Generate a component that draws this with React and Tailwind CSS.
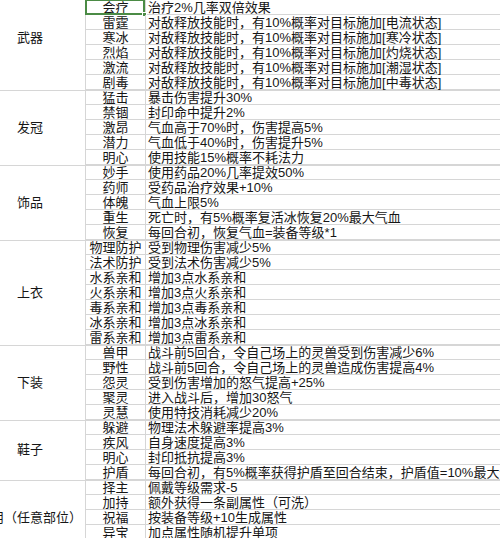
import React from 'react';

const groups = [
  {
    name: '武器',
    rows: [
      ['', ''],
      ['会疗', '治疗2%几率双倍效果', true],
      ['雷霆', '对敌释放技能时，有10%概率对目标施加[电流状态]'],
      ['寒冰', '对敌释放技能时，有10%概率对目标施加[寒冷状态]'],
      ['烈焰', '对敌释放技能时，有10%概率对目标施加[灼烧状态]'],
      ['激流', '对敌释放技能时，有10%概率对目标施加[潮湿状态]'],
      ['剧毒', '对敌释放技能时，有10%概率对目标施加[中毒状态]'],
    ],
  },
  {
    name: '发冠',
    rows: [
      ['猛击', '暴击伤害提升30%'],
      ['禁锢', '封印命中提升2%'],
      ['激昂', '气血高于70%时，伤害提高5%'],
      ['潜力', '气血低于40%时，伤害提升5%'],
      ['明心', '使用技能15%概率不耗法力'],
    ],
  },
  {
    name: '饰品',
    rows: [
      ['妙手', '使用药品20%几率提效50%'],
      ['药师', '受药品治疗效果+10%'],
      ['体魄', '气血上限5%'],
      ['重生', '死亡时，有5%概率复活冰恢复20%最大气血'],
      ['恢复', '每回合初，恢复气血=装备等级*1'],
    ],
  },
  {
    name: '上衣',
    rows: [
      ['物理防护', '受到物理伤害减少5%'],
      ['法术防护', '受到法术伤害减少5%'],
      ['水系亲和', '增加3点水系亲和'],
      ['火系亲和', '增加3点火系亲和'],
      ['毒系亲和', '增加3点毒系亲和'],
      ['冰系亲和', '增加3点冰系亲和'],
      ['雷系亲和', '增加3点雷系亲和'],
    ],
  },
  {
    name: '下装',
    rows: [
      ['兽甲', '战斗前5回合，令自己场上的灵兽受到伤害减少6%'],
      ['野性', '战斗前5回合，令自己场上的灵兽造成伤害提高4%'],
      ['怨灵', '受到伤害增加的怒气提高+25%'],
      ['聚灵', '进入战斗后，增加30怒气'],
      ['灵慧', '使用特技消耗减少20%'],
    ],
  },
  {
    name: '鞋子',
    rows: [
      ['躲避', '物理法术躲避率提高3%'],
      ['疾风', '自身速度提高3%'],
      ['明心', '封印抵抗提高3%'],
      ['护盾', '每回合初，有5%概率获得护盾至回合结束，护盾值=10%最大气血'],
    ],
  },
  {
    name: '通用（任意部位）',
    rows: [
      ['择主', '佩戴等级需求-5'],
      ['加持', '额外获得一条副属性（可洗）'],
      ['祝福', '按装备等级+10生成属性'],
      ['异宝', '加点属性随机提升单项'],
      ['', ''],
    ],
  },
];

const Row = ({ name, desc, selected }) => (
  <div className="flex h-[15px] border-b border-[#d6d6d6]">
    <div className="relative w-[60px] shrink-0 border-r border-[#d6d6d6] text-center">
      {name}
      {selected && (
        <div className="absolute -left-[1px] -top-[1px] w-[60px] h-[16px] border-2 border-[#4b8b45]">
          <div className="absolute -right-[4px] -bottom-[4px] w-[5px] h-[5px] bg-[#4b8b45] border border-white" />
        </div>
      )}
    </div>
    <div className="pl-[2px] whitespace-nowrap">{desc}</div>
  </div>
);

export default function App() {
  return (
    <div
      className="w-[500px] h-[538px] overflow-hidden bg-white text-[#161616] text-[13px] leading-[16px]"
      style={{ fontFamily: '"Liberation Sans", "Noto Sans CJK SC", sans-serif' }}
    >
      <div className="-mt-[15px] -ml-[25px] w-[560px]">
        {groups.map((group) => (
          <div key={group.name} className="flex border-b border-[#d6d6d6] -mb-[1px]">
            <div className="w-[111px] shrink-0 border-r border-[#d6d6d6] flex items-center justify-center whitespace-nowrap">
              {group.name}
            </div>
            <div className="flex-1">
              {group.rows.map(([name, desc, selected], i) => (
                <Row key={i} name={name} desc={desc} selected={selected} />
              ))}
            </div>
          </div>
        ))}
      </div>
    </div>
  );
}
